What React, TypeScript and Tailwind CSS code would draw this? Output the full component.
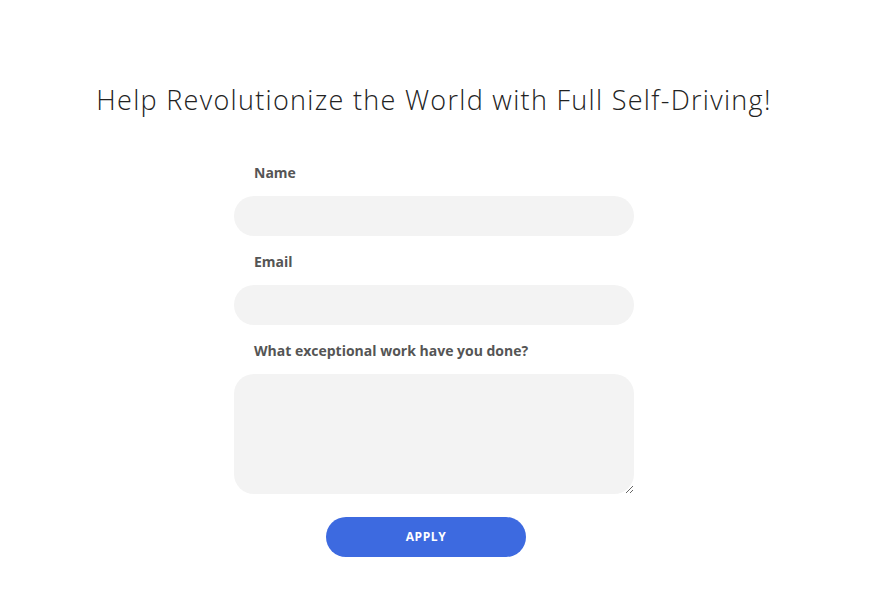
export default function App() {
  return (
    <div className="min-h-[607px] w-full bg-white pr-[9px] font-['Open_Sans',sans-serif]">
      <div className="flex flex-col items-center pt-[82px]">
        <h1 className="text-[27px] font-light leading-[36px] text-[#222] tracking-[1.3px]">
          Help Revolutionize the World with Full Self-Driving!
        </h1>
        <form className="mt-[46px] flex w-[400px] flex-col" onSubmit={(e) => e.preventDefault()}>
          <label className="px-5 text-[14px] font-bold leading-[18px] text-[#555]">Name</label>
          <input className="mt-[14px] h-10 w-full rounded-full bg-[#f3f3f3] px-5 outline-none" />
          <label className="mt-[17px] px-5 text-[14px] font-bold leading-[18px] text-[#555]">Email</label>
          <input className="mt-[14px] h-10 w-full rounded-full bg-[#f3f3f3] px-5 outline-none" />
          <label className="mt-[17px] px-5 text-[14px] font-bold leading-[18px] text-[#555]">
            What exceptional work have you done?
          </label>
          <textarea className="mt-[14px] block h-[120px] w-full rounded-[20px] bg-[#f3f3f3] px-5 py-3 outline-none" />
          <button
            type="submit"
            className="ml-[92px] mt-[23px] h-10 w-[200px] rounded-full bg-[#3d6ae0] text-[12px] font-bold tracking-[0.6px] text-white"
          >
            APPLY
          </button>
        </form>
      </div>
    </div>
  );
}
